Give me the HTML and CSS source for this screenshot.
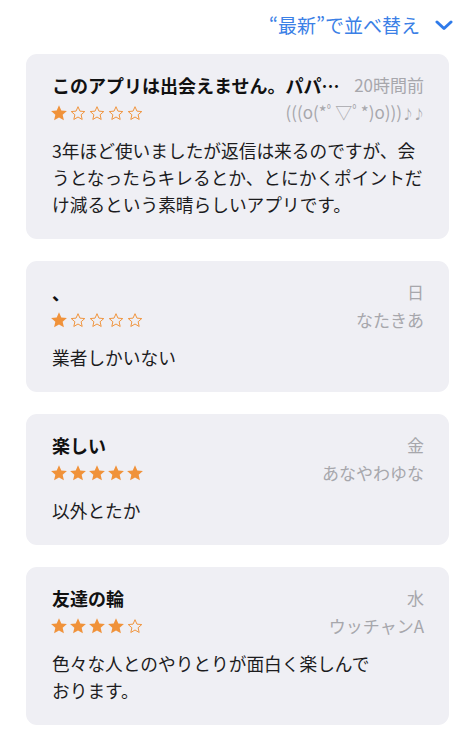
FILE: index.html
```html
<!DOCTYPE html>
<html lang="ja">
<head>
<meta charset="utf-8">
<title>レビュー</title>
<link rel="stylesheet" href="styles.css">
</head>
<body>
<svg width="0" height="0" class="defs">
  <defs>
    <symbol id="star-full" viewBox="0 0 24 24">
      <path d="M12 1.8l3.05 6.9 7.5.7-5.68 4.98 1.68 7.360L12 17.9l-6.55 3.84 1.68-7.36L1.45 9.4l7.5-.7z" fill="#f0923a"/>
    </symbol>
    <symbol id="star-empty" viewBox="0 0 24 24">
      <path d="M12 3.6l2.6 5.9 6.4.6-4.85 4.25 1.43 6.28L12 17.35l-5.58 3.28 1.43-6.28L3 10.1l6.4-.6z" fill="none" stroke="#f0923a" stroke-width="1.3" stroke-linejoin="round"/>
    </symbol>
  </defs>
</svg>
<header class="sort">
  <span class="sort-label">“最新”で並べ替え</span>
  <svg class="chevron" width="18" height="11" viewBox="0 0 18 11"><polyline points="2,2 9,8.5 16,2" fill="none" stroke="#2f7bea" stroke-width="3" stroke-linecap="round" stroke-linejoin="round"/></svg>
</header>
<main class="list">
  <article class="card">
    <div class="row">
      <h2 class="title">このアプリは出会えません。パパ…</h2>
      <span class="meta">20時間前</span>
    </div>
    <div class="row row-stars">
      <span class="stars"><svg><use href="#star-full"/></svg><svg><use href="#star-empty"/></svg><svg><use href="#star-empty"/></svg><svg><use href="#star-empty"/></svg><svg><use href="#star-empty"/></svg></span>
      <span class="meta">(((o(*ﾟ▽ﾟ*)o)))<span class="note">♪♪</span></span>
    </div>
    <p class="body">3年ほど使いましたが返信は来るのですが、会うとなったらキレるとか、とにかくポイントだけ減るという素晴らしいアプリです。</p>
  </article>
  <article class="card">
    <div class="row">
      <h2 class="title">、</h2>
      <span class="meta">日</span>
    </div>
    <div class="row row-stars">
      <span class="stars"><svg><use href="#star-full"/></svg><svg><use href="#star-empty"/></svg><svg><use href="#star-empty"/></svg><svg><use href="#star-empty"/></svg><svg><use href="#star-empty"/></svg></span>
      <span class="meta">なたきあ</span>
    </div>
    <p class="body">業者しかいない</p>
  </article>
  <article class="card">
    <div class="row">
      <h2 class="title">楽しい</h2>
      <span class="meta">金</span>
    </div>
    <div class="row row-stars">
      <span class="stars"><svg><use href="#star-full"/></svg><svg><use href="#star-full"/></svg><svg><use href="#star-full"/></svg><svg><use href="#star-full"/></svg><svg><use href="#star-full"/></svg></span>
      <span class="meta">あなやわゆな</span>
    </div>
    <p class="body">以外とたか</p>
  </article>
  <article class="card">
    <div class="row">
      <h2 class="title">友達の輪</h2>
      <span class="meta">水</span>
    </div>
    <div class="row row-stars">
      <span class="stars"><svg><use href="#star-full"/></svg><svg><use href="#star-full"/></svg><svg><use href="#star-full"/></svg><svg><use href="#star-full"/></svg><svg><use href="#star-empty"/></svg></span>
      <span class="meta">ウッチャンA</span>
    </div>
    <p class="body">色々な人とのやりとりが面白く楽しんで<br>おります。</p>
  </article>
</main>
</body>
</html>
```
FILE: styles.css
```css
* { box-sizing: border-box; }
html, body {
  margin: 0;
  padding: 0;
  background: #ffffff;
}
body {
  font-family: "Noto Sans CJK JP", "Noto Sans", sans-serif;
  color: #111111;
  width: 476px;
  overflow: hidden;
}
.defs { position: absolute; width: 0; height: 0; }
.sort {
  display: flex;
  justify-content: flex-end;
  align-items: center;
  gap: 15px;
  height: 50px;
  padding-right: 23px;
}
.sort-label {
  font-size: 19px;
  color: #3b80e6;
  line-height: 24px;
}
.chevron { display: block; margin-top: 1px; }
.list {
  display: flex;
  flex-direction: column;
  gap: 22px;
  padding: 4px 27px 0 26px;
}
.card {
  background: #efeff4;
  border-radius: 11px;
  padding: 18px 25px 21px 26px;
}
.row {
  display: flex;
  align-items: center;
  justify-content: space-between;
  gap: 9px;
  height: 26px;
}
.row-stars { height: 29px; }
.title {
  margin: 0;
  font-size: 18px;
  font-weight: 700;
  line-height: 26px;
  color: #111111;
  white-space: nowrap;
  overflow: hidden;
  min-width: 0;
}
.meta {
  font-size: 17px;
  line-height: 26px;
  color: #a7a7ac;
  white-space: nowrap;
  flex-shrink: 0;
}
.note {
  font-size: 12px;
  letter-spacing: -1px;
}
.stars {
  display: flex;
  gap: 1px;
  margin-left: -2px;
}
.stars svg {
  width: 18px;
  height: 18px;
  display: block;
}
.body {
  margin: 10px 0 0;
  font-size: 17.7px;
  line-height: 27px;
  color: #1c1c1e;
}
```
